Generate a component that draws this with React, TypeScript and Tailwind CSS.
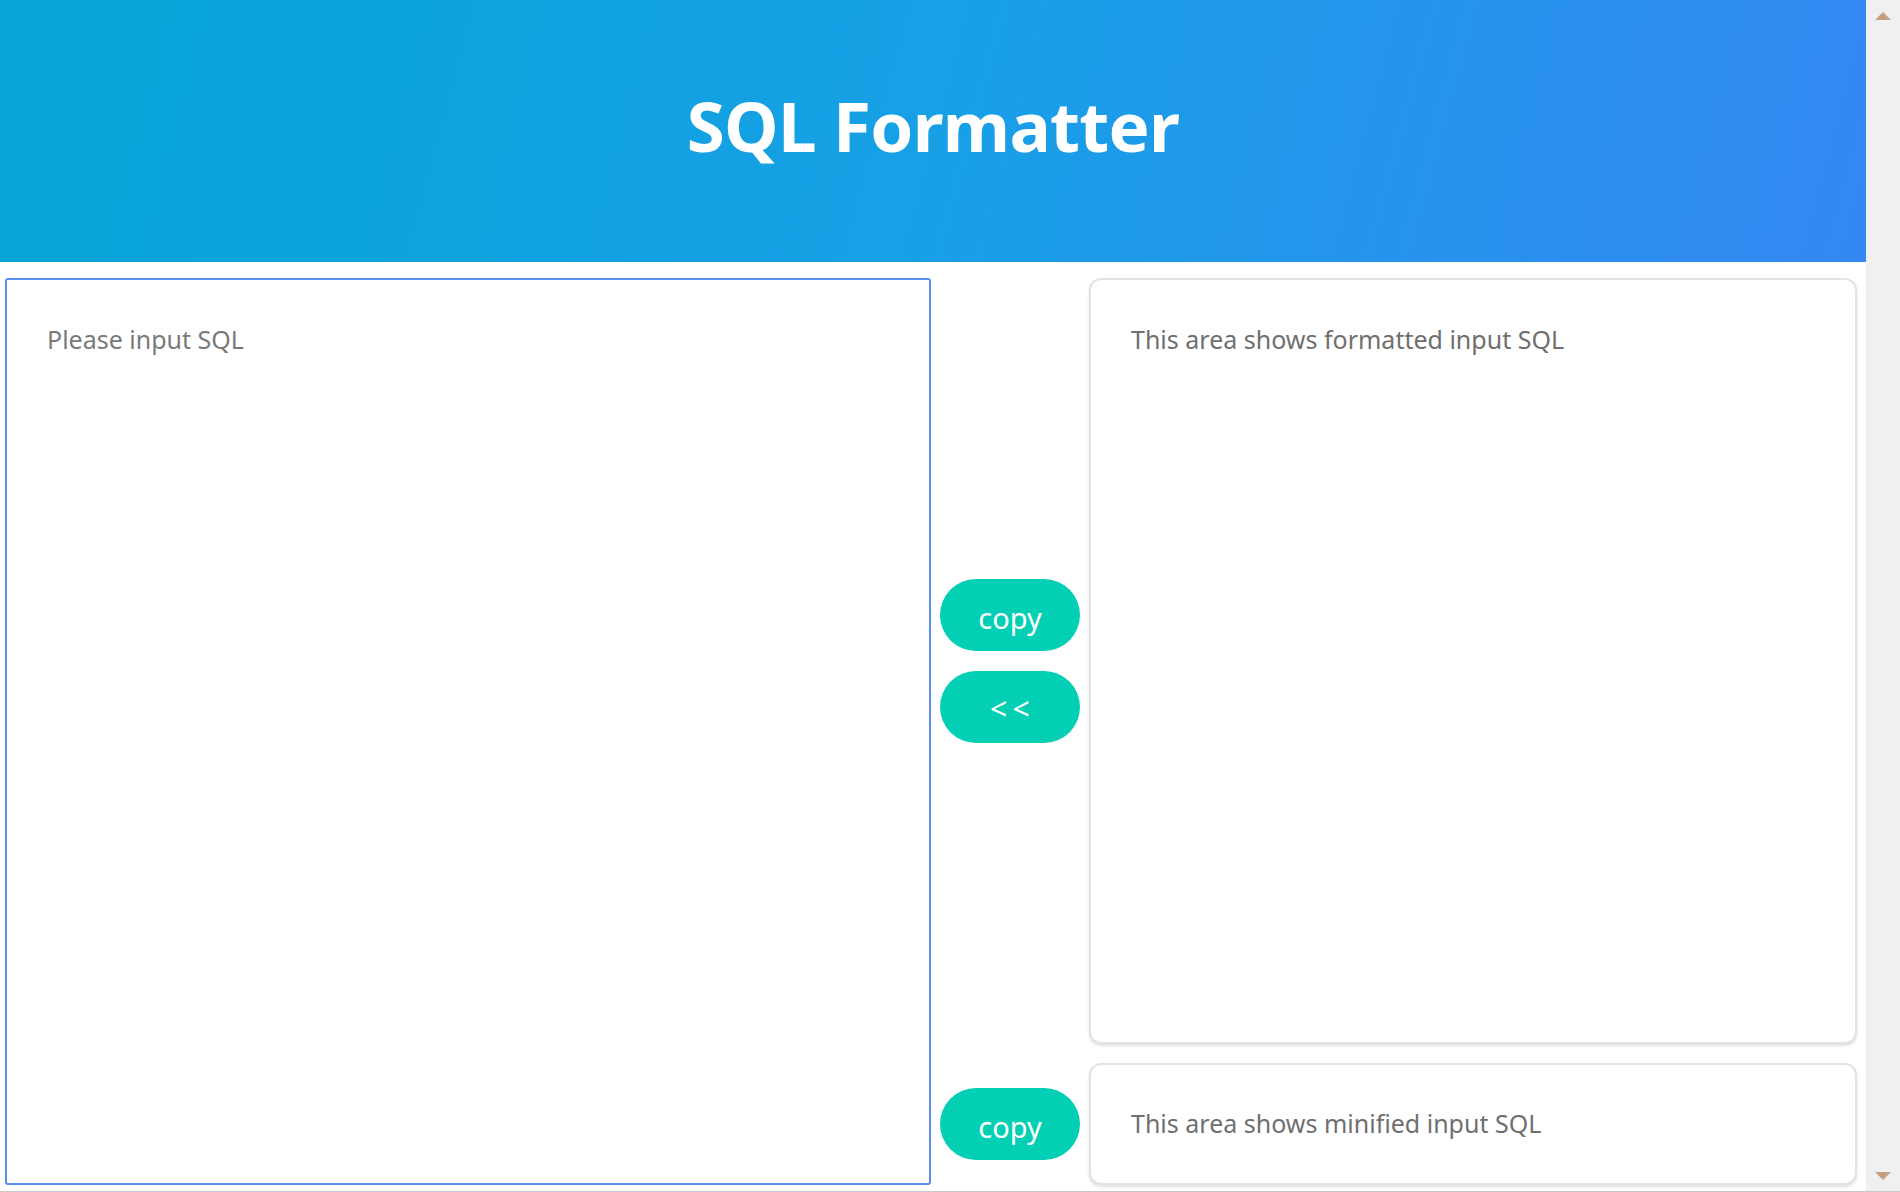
import React, { useState } from 'react';

export default function App() {
  const [sql, setSql] = useState('');

  return (
    <div className="w-[1900px] h-[1192px] flex overflow-hidden bg-white border-b border-[#c8c8c8] font-['Noto_Sans',sans-serif]">
      {/* Page */}
      <div className="w-[1866px] flex flex-col">
        <header className="h-[262px] flex items-center justify-center bg-[linear-gradient(105deg,#05a5d6_0%,#17a0e6_50%,#3487f2_100%)]">
          <h1 className="text-white font-bold text-[69px] leading-none tracking-[-0.01em] -mt-[12px]">SQL Formatter</h1>
        </header>

        <div className="flex pt-[16px] pl-[5px] h-[923px]">
          {/* Input */}
          <textarea
            value={sql}
            onChange={(e) => setSql(e.target.value)}
            placeholder="Please input SQL"
            className="w-[926px] h-[907px] resize-none rounded-[3px] border-2 border-[#5a8ff0] bg-white p-10 pt-[41px] pl-[40px] text-[25px] leading-[1.5] text-[#333] placeholder:text-[#7a7a7a] outline-none"
          />

          {/* Buttons */}
          <div className="w-[158px] flex flex-col gap-[19px]">
            <div className="h-[766px] flex flex-col items-center justify-center gap-[20px]">
              <button className="w-[140px] h-[72px] rounded-full bg-[#02cfb3] text-white text-[29px] leading-none pt-[4px]">copy</button>
              <button className="w-[140px] h-[72px] rounded-full bg-[#02cfb3] text-white text-[30px] leading-none tracking-[0.18em] pl-[5px] pt-[4px]">&lt;&lt;</button>
            </div>
            <div className="h-[122px] flex items-center justify-center">
              <button className="w-[140px] h-[72px] rounded-full bg-[#02cfb3] text-white text-[29px] leading-none pt-[4px]">copy</button>
            </div>
          </div>

          {/* Output */}
          <div className="w-[768px] flex flex-col gap-[19px]">
            <div className="h-[766px] rounded-[12px] border-2 border-[#e3e3e3] shadow-[0_2px_3px_rgba(0,0,0,0.12)] bg-white px-[40px] pt-[41px]">
              <p className="text-[25px] leading-[1.5] text-[#6f6f6f]">This area shows formatted input SQL</p>
            </div>
            <div className="h-[122px] rounded-[12px] border-2 border-[#e3e3e3] shadow-[0_2px_3px_rgba(0,0,0,0.12)] bg-white px-[40px] flex items-center">
              <p className="text-[25px] leading-[1.5] text-[#6f6f6f]">This area shows minified input SQL</p>
            </div>
          </div>
        </div>
      </div>

      {/* Scrollbar */}
      <div className="w-[34px] h-full bg-[#f0f0f0] flex flex-col items-center justify-between pt-[12px] pb-[11px]">
        <div className="w-0 h-0 border-l-[8px] border-r-[8px] border-b-[8px] border-l-transparent border-r-transparent border-b-[#c4a081]" />
        <div className="w-0 h-0 border-l-[8px] border-r-[8px] border-t-[8px] border-l-transparent border-r-transparent border-t-[#c4a081]" />
      </div>
    </div>
  );
}
